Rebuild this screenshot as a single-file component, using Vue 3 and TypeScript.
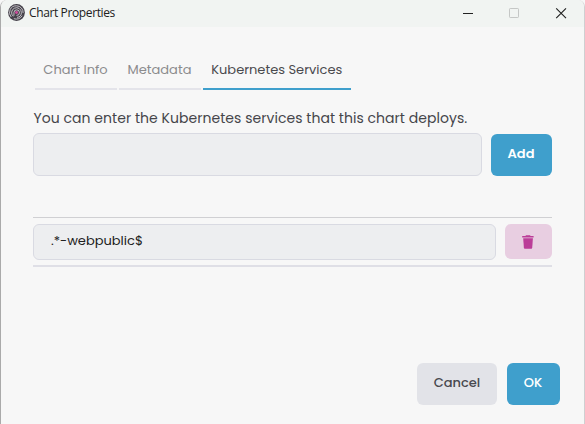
<script setup lang="ts">
import { ref } from 'vue'

const tabs = [
  { id: 'info', label: 'Chart Info' },
  { id: 'metadata', label: 'Metadata' },
  { id: 'services', label: 'Kubernetes Services' },
]
const active = ref('services')
const draft = ref('')
const services = ref<string[]>(['.*-webpublic$'])

function add() {
  const value = draft.value.trim()
  if (value) services.value.push(value)
  draft.value = ''
}
function remove(index: number) {
  services.value.splice(index, 1)
}
</script>

<template>
  <div class="window">
    <header class="titlebar">
      <svg class="logo" viewBox="0 0 16 16">
        <circle cx="8" cy="8" r="7.9" fill="#46424b" />
        <g fill="none" stroke="#d8d6da" stroke-width=".8">
          <path d="M3 12.2A6.3 6.3 0 0 1 8 1.7a6.3 6.3 0 0 1 6.2 6.8M5.5 13.8A6.3 6.3 0 0 0 13.3 11" />
          <path d="M5 11.6A4.6 4.6 0 1 1 12.6 8a4.6 4.6 0 0 1-4.1 4.6" />
          <path d="M5.6 11V8A2.6 2.6 0 1 1 8 10.7" />
        </g>
        <circle cx="8" cy="8" r="1.4" fill="#d04c9f" />
      </svg>
      <span class="title">Chart Properties</span>
      <svg class="controls" viewBox="0 0 106 14" fill="none">
        <path d="M1 7.5H11" stroke="#222" />
        <rect x="47.5" y="2.5" width="9" height="9" rx=".7" stroke="#c5c7c6" />
        <path d="M94.2 2.3L104 12.1M104 2.3L94.2 12.1" stroke="#222" stroke-width="1.15" />
      </svg>
    </header>
    <main class="content">
      <nav class="tabs">
        <button
          v-for="tab in tabs"
          :key="tab.id"
          :class="['tab', tab.id, { active: active === tab.id }]"
          @click="active = tab.id"
        >{{ tab.label }}</button>
      </nav>
      <p class="hint">You can enter the Kubernetes services that this chart deploys.</p>
      <div class="entry">
        <input v-model="draft" class="field" />
        <button class="btn primary add" @click="add">Add</button>
      </div>
      <ul class="list">
        <li v-for="(service, i) in services" :key="i" class="item">
          <div class="field value"><span>{{ service }}</span></div>
          <button class="btn delete" @click="remove(i)">
            <svg viewBox="0 0 12 14" fill="#bb3d98">
              <path d="M4 .2H8L8.6 1H11.6V2.5H.2V1H3.4Z" />
              <path d="M1.2 3.3H10.9L10.2 13Q10.1 13.8 9.3 13.8H2.8Q2 13.8 1.9 13Z" />
            </svg>
          </button>
        </li>
      </ul>
    </main>
    <footer class="actions">
      <button class="btn cancel">Cancel</button>
      <button class="btn primary ok">OK</button>
    </footer>
  </div>
</template>

<style>
body {
  margin: 0;
  background: #f7f7f7;
}
</style>

<style scoped>
* {
  box-sizing: border-box;
}
.window {
  display: flex;
  flex-direction: column;
  width: 585px;
  height: 424px;
  overflow: hidden;
  border-left: 1px solid #aaa;
  border-right: 1px solid #cfcfd1;
  border-radius: 7px 7px 0 0;
  background: #f7f7f7;
  font-family: Poppins, Inter, sans-serif;
}
.titlebar {
  display: flex;
  align-items: center;
  flex: none;
  height: 27px;
  padding: 0 16px 2px 7px;
  background: #f1f4f2;
}
.logo {
  width: 17px;
  height: 17px;
}
.title {
  margin-left: 4px;
  color: #202020;
  font: 12px/16px "Open Sans", sans-serif;
  letter-spacing: -0.38px;
}
.controls {
  width: 106px;
  height: 14px;
  margin-left: auto;
}
.content {
  padding: 31px 32px 0;
}
button {
  border: 0;
  padding: 0;
  font-family: inherit;
}
.tabs {
  display: flex;
  gap: 2px;
  padding-left: 1.5px;
}
.tab {
  height: 32px;
  padding: 0 0 7px;
  border-bottom: 2px solid #e4e4ea;
  background: none;
  color: #8b8b8d;
  font-size: 13px;
  line-height: 23px;
  white-space: nowrap;
}
.info {
  width: 82px;
}
.metadata {
  width: 82px;
}
.services {
  width: 148.5px;
}
.tab.active {
  border-color: #3f9fcc;
  color: #4a4a4e;
}
.hint {
  margin: 18px 0 4px 0.5px;
  color: #45454a;
  font-size: 14px;
  line-height: 21px;
  letter-spacing: 0.04px;
  white-space: nowrap;
}
.entry {
  display: flex;
  gap: 9px;
}
.field {
  flex: 1;
  min-width: 0;
  height: 43px;
  border: 1px solid #d9dae2;
  border-radius: 6px;
  outline: none;
  background: #edeef0;
}
.btn {
  display: flex;
  align-items: center;
  justify-content: center;
  height: 42px;
  border-radius: 6px;
  font-size: 13px;
  font-weight: 500;
}
.primary {
  background: #3f9fcc;
  color: #fff;
}
.add {
  width: 61px;
  margin-top: 1px;
  padding: 0 1px 2px 0;
  font-weight: 600;
}
.list {
  margin: 41px 0 0;
  padding: 0;
  border-top: 1px solid #d0d0d3;
  list-style: none;
}
.item {
  display: flex;
  gap: 9px;
  padding: 6px 0 5px;
  border-bottom: 2px solid #dfdfe6;
}
.value {
  display: flex;
  align-items: center;
  height: 36px;
  padding: 0 17px 2px;
  color: #222;
  font-size: 13px;
}
.delete {
  width: 47px;
  height: 35px;
  padding-right: 1px;
  background: #e8cee1;
}
.delete svg {
  width: 12px;
  height: 14px;
}
.actions {
  display: flex;
  gap: 10px;
  margin-top: auto;
  padding: 0 24px 19px;
  justify-content: flex-end;
}
.cancel {
  width: 80px;
  padding-bottom: 3px;
  background: #e2e3e8;
  color: #49494f;
}
.ok {
  width: 53px;
  padding: 0 1px 3px 0;
}
</style>
